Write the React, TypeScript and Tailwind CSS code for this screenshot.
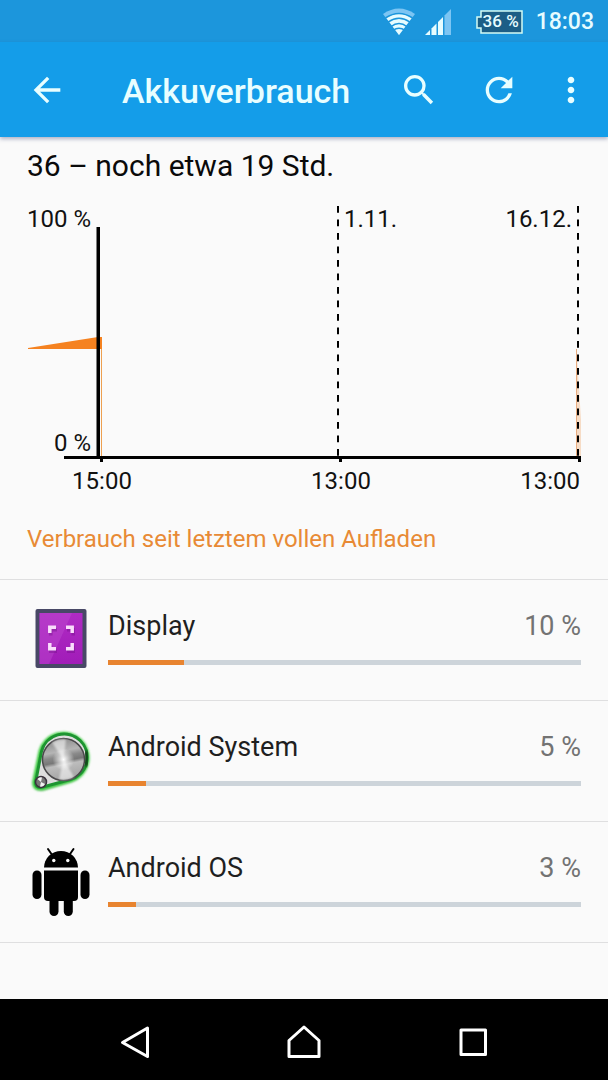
import type { ReactNode } from "react";
import { MdArrowBack, MdMoreVert, MdRefresh, MdSearch } from "react-icons/md";

function StatusBar() {
  return (
    <div className="flex h-[42px] items-center justify-end bg-[#1c96dc] pt-[2px] pr-[14px] text-[#e6fcff]">
      <svg className="mr-[10px] h-[28px] w-[32px]" viewBox="0 0 32 28" role="img" aria-label="WLAN">
        <path d="M0 6Q16 -5 32 6L16 27Z" fill="#7cc5f3" />
        <path d="M3.5 10.2Q16 1.5 28.5 10.2L16 27Z" fill="currentColor" />
        <g fill="none" stroke="#1c96dc" strokeWidth="1.5">
          <path d="M2.5 9.8Q16 1 29.5 9.8" />
          <path d="M5 14.2Q16 6.5 27 14.2" />
          <path d="M8 18.6Q16 12.5 24 18.6" />
          <path d="M10 22.4Q16 18 22 22.4" />
        </g>
      </svg>
      <svg className="mr-[25px] h-[26px] w-[26px]" viewBox="0 0 26 26" role="img" aria-label="Mobilfunksignal">
        <path d="M0 26L5 21V26Z" fill="currentColor" />
        <path d="M6.5 26V19.5L11.500 14.5V26Z" fill="currentColor" />
        <path d="M13 26V13L18 8V26Z" fill="currentColor" />
        <path d="M19.500 26V6.500L26 0V26Z" fill="#7cc5f3" />
      </svg>
      <div className="relative mr-[13px] flex h-[24px] w-[47px] items-center justify-center pl-[3px] text-[17px] font-medium">
        <svg className="absolute inset-0 h-full w-full" viewBox="0 0 47 24" aria-hidden="true">
          <path d="M5 1H46V23H5V18H1V7H5Z" fill="#1c5e86" stroke="#d4fbf4" strokeWidth="1.500" />
        </svg>
        <span className="relative whitespace-nowrap">36 %</span>
      </div>
      <span className="text-[23px] font-medium">18:03</span>
    </div>
  );
}

function IconButton({ label, children }: { label: string; children: ReactNode }) {
  return (
    <button type="button" aria-label={label} className="flex h-[40px] w-[40px] shrink-0 items-center justify-center">
      {children}
    </button>
  );
}

function AppBar() {
  return (
    <header className="relative flex h-[95px] items-center bg-[#149de9] pr-[17px] pl-[27px] text-[40px] text-[#e8feff] shadow-[0_2px_4px_rgba(60,70,120,0.4)]">
      <IconButton label="Zurück">
        <MdArrowBack />
      </IconButton>
      <h1 className="ml-[55px] flex-1 pt-[2px] text-[34px] leading-[40px] font-medium">Akkuverbrauch</h1>
      <div className="flex items-center">
        <IconButton label="Suchen">
          <MdSearch />
        </IconButton>
        <div className="ml-[40px] flex">
          <IconButton label="Aktualisieren">
            <MdRefresh />
          </IconButton>
        </div>
        <div className="ml-[32px] flex">
          <IconButton label="Weitere Optionen">
            <MdMoreVert />
          </IconButton>
        </div>
      </div>
    </header>
  );
}

function BatteryChart() {
  return (
    <svg className="mt-[14px] block h-auto w-full" viewBox="0 0 554 300" role="img" aria-label="Akkuverlauf">
      <path d="M1 148L71 137H75V149H1Z" fill="#f58220" />
      <path d="M74.500 149V256" stroke="#eea050" strokeWidth="1" />
      <path d="M549.500 149L554 220V256H549.500Z" fill="#f6dcc6" />
      <path d="M549.500 149V256" stroke="#e8ac80" strokeWidth="1" />
      <g stroke="#000" strokeWidth="2" strokeDasharray="6.750 6.750">
        <path d="M311 6V256" />
        <path d="M551 6V256" />
      </g>
      <g fill="#000">
        <rect x="69.500" y="27" width="3.500" height="230" />
        <rect x="37" y="256" width="517" height="3" />
        <rect x="73" y="258" width="3" height="4" />
        <rect x="312" y="258" width="3" height="4" />
        <rect x="551" y="258" width="3" height="4" />
      </g>
      <g fill="#111" fontSize="24">
        <text x="64" y="27" textAnchor="end">100 %</text>
        <text x="64" y="251" textAnchor="end">0 %</text>
        <text x="317" y="27">1.11.</text>
        <text x="545" y="27" textAnchor="end">16.12.</text>
        <text x="75" y="289" textAnchor="middle">15:00</text>
        <text x="314" y="289" textAnchor="middle">13:00</text>
        <text x="553" y="289" textAnchor="end">13:00</text>
      </g>
    </svg>
  );
}

const iconClass = "h-[72px] w-[68px] shrink-0";

function DisplayIcon() {
  return (
    <svg className={iconClass} viewBox="0 0 68 72" aria-hidden="true">
      <defs>
        <linearGradient id="screen" x1="0" y1="0" x2="0" y2="1">
          <stop offset="0" stopColor="#b02bc4" />
          <stop offset="1" stopColor="#a11cb8" />
        </linearGradient>
      </defs>
      <g transform="translate(0 -1)">
        <rect x="8.500" y="6" width="51" height="59" rx="2" fill="#484866" />
        <rect x="12.500" y="10" width="43" height="51" fill="url(#screen)" />
        <path d="M12.500 10H45L22 61H12.500Z" fill="#c14fd2" opacity="0.400" />
        <g fill="none" stroke="#701086" strokeWidth="3.500" opacity="0.400" transform="translate(1 1.500)">
          <path d="M22.800 31V25.300H29M39 25.300H45.200V31M45.200 41V46.700H39M29 46.700H22.800V41" />
        </g>
        <g transform="translate(0 0)" fill="none" stroke="#f9dcfb" strokeWidth="3.500">
          <path d="M22.800 31V25.300H29M39 25.300H45.200V31" transform="translate(0 -1)" />
          <path d="M45.200 41V46.700H39M29 46.700H22.800V41" transform="translate(0 -1)" />
        </g>
      </g>
    </svg>
  );
}

function SystemIcon() {
  return (
    <svg className={iconClass} viewBox="0 0 68 72" aria-hidden="true">
      <defs>
        <linearGradient id="metal" x1="0.400" y1="0" x2="0.600" y2="1">
          <stop offset="0" stopColor="#8a8a8a" />
          <stop offset="0.300" stopColor="#b5b5b5" />
          <stop offset="0.420" stopColor="#8a8a8a" />
          <stop offset="0.540" stopColor="#777" />
          <stop offset="0.620" stopColor="#bdbdbd" />
          <stop offset="1" stopColor="#a0a0a0" />
        </linearGradient>
        <radialGradient id="shine">
          <stop offset="0" stopColor="#fff" />
          <stop offset="1" stopColor="#fff" stopOpacity="0" />
        </radialGradient>
        <filter id="soft" x="-20%" y="-20%" width="140%" height="140%">
          <feGaussianBlur stdDeviation="1.300" />
        </filter>
      </defs>
      <g transform="translate(0 2)">
        <path d="M14 22A24 24 0 1 1 42.500 55L17 63Q8 64.500 7 57Z" fill="#777" opacity="0.500" filter="url(#soft)" />
        <path
          d="M13.500 24A24 24 0 1 1 44 53.500L16 61.500C9 63 6 59 7.500 53Z"
          fill="#d9dcd9"
          stroke="#3fce43"
          strokeWidth="4"
          filter="url(#soft)"
        />
        <path
          d="M14.500 24.500A23.200 23.200 0 1 1 43.500 52.500L16 60C10 61.500 7.500 58.500 9 53Z"
          fill="#dedede"
          stroke="#1d9431"
          strokeWidth="3"
        />
        <path d="M58.800 24Q61 31 58.500 39" fill="none" stroke="#0b4515" strokeWidth="4" filter="url(#soft)" />
        <circle cx="36.500" cy="32.500" r="21" fill="url(#metal)" stroke="#49484a" strokeWidth="1.500" />
        <path d="M36.500 32.500L25 15.500A21 21 0 0 1 39 12.500ZM36.500 32.500L47 50A21 21 0 0 1 32 52.500Z" fill="#fff" opacity="0.550" filter="url(#soft)" />
        <circle cx="36.500" cy="32.500" r="11" fill="url(#shine)" />
        <circle cx="14" cy="55" r="5.500" fill="#777" stroke="#3b333d" strokeWidth="1.500" />
        <path d="M14 55L10.500 52A4.500 4.500 0 0 1 15 50.500ZM14 55L18 57A4.500 4.500 0 0 1 13 59.500Z" fill="#fff" opacity="0.900" />
      </g>
    </svg>
  );
}

function AndroidIcon() {
  return (
    <svg className={iconClass} viewBox="0 0 68 72" aria-hidden="true">
      <g stroke="#000" strokeWidth="2" strokeLinecap="round">
        <path d="M21 3L25.500 9.500M46.500 3L42 9.500" />
      </g>
      <path d="M17 21.500A17 16.500 0 0 1 51 21.500Z" />
      <circle cx="26.800" cy="14.500" r="1.700" fill="#fafafa" />
      <circle cx="40.800" cy="14.500" r="1.700" fill="#fafafa" />
      <path d="M17 24.500H51V51Q51 55 47 55H21Q17 55 17 51Z" />
      <rect x="5.500" y="24.500" width="9" height="28.500" rx="4.500" />
      <rect x="53.500" y="24.500" width="9" height="28.500" rx="4.500" />
      <rect x="22.500" y="46" width="9" height="24" rx="4.500" />
      <rect x="36.800" y="46" width="9" height="24" rx="4.500" />
    </svg>
  );
}

const consumers = [
  { name: "Display", percent: 10, bar: 16, icon: <DisplayIcon /> },
  { name: "Android System", percent: 5, bar: 8, icon: <SystemIcon /> },
  { name: "Android OS", percent: 3, bar: 6, icon: <AndroidIcon /> },
];

function ConsumerList() {
  return (
    <ul className="border-t border-[#dfdfe0]">
      {consumers.map((item) => (
        <li key={item.name} className="flex h-[121px] items-center gap-[13px] border-b border-[#dfdfe0] px-[27px]">
          {item.icon}
          <div className="flex-1 pb-[5px]">
            <div className="flex justify-between text-[27px] leading-[32px]">
              <span className="text-[#1f1f1f]">{item.name}</span>
              <span className="text-[#737373]">{item.percent} %</span>
            </div>
            <div className="mt-[18px] h-[5px] bg-[#cdd4da]">
              <div className="h-full bg-[#e88430]" style={{ width: `${item.bar}%` }} />
            </div>
          </div>
        </li>
      ))}
    </ul>
  );
}

function NavButton({ label, children }: { label: string; children: ReactNode }) {
  return (
    <button type="button" aria-label={label} className="flex flex-1 items-center justify-center">
      <svg className="h-[40px] w-[40px]" viewBox="0 0 40 40" fill="none" stroke="#fff" strokeWidth="3" strokeLinejoin="round">
        {children}
      </svg>
    </button>
  );
}

function NavigationBar() {
  return (
    <nav className="flex h-[81px] bg-black px-[51px]">
      <NavButton label="Zurück">
        <path d="M32.500 8L7.500 22.500L32.500 36.500Z" />
      </NavButton>
      <NavButton label="Startbildschirm">
        <path d="M20 7L35 20.500V36.500H5V20.500Z" />
      </NavButton>
      <NavButton label="Letzte Apps">
        <path d="M8 10H32.500V34.500H8Z" />
      </NavButton>
    </nav>
  );
}

export default function App() {
  return (
    <div className="flex min-h-screen flex-col bg-[#fafafa] font-['Roboto',sans-serif]">
      <StatusBar />
      <AppBar />
      <main className="flex-1">
        <section className="px-[27px] pt-[9px]">
          <h2 className="text-[30px] leading-[40px] text-[#0a0a0a]">36 – noch etwa 19 Std.</h2>
          <BatteryChart />
        </section>
        <section>
          <h2 className="px-[27px] pt-[23px] pb-[24px] text-[24px] leading-[32px] text-[#e88a35]">
            Verbrauch seit letztem vollen Aufladen
          </h2>
          <ConsumerList />
        </section>
      </main>
      <NavigationBar />
    </div>
  );
}
